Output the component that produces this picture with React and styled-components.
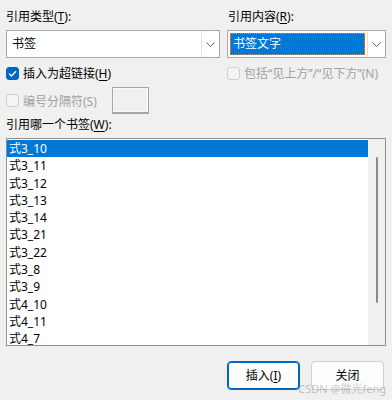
import React from "react";
import styled, { createGlobalStyle } from "styled-components";

const Global = createGlobalStyle`
  html, body { margin: 0; padding: 0; background: #f0f0f0; }
  body { width: 392px; height: 400px; overflow: hidden; }
  * { box-sizing: border-box; }
`;

const Dialog = styled.div`
  position: relative;
  width: 392px;
  height: 400px;
  padding: 9px 6px 0 6px;
  background: #f0f0f0;
  font-family: "Noto Sans", "Noto Sans CJK SC", sans-serif;
  font-size: 12px;
  color: #000;
`;

const TopGrid = styled.div`
  display: grid;
  grid-template-columns: 214px 159px;
  column-gap: 7px;
`;

const Label = styled.div`
  height: 16px;
  line-height: 16px;
  white-space: nowrap;
  padding-left: ${(p) => p.$indent || 0}px;
  color: ${(p) => (p.$disabled ? "#a0a0a0" : "#000")};
`;

const U = styled.span`
  text-decoration: underline;
  text-underline-offset: 2px;
`;

const Combo = styled.div`
  margin-top: 5px;
  height: 28px;
  border: 1px solid #a9a9a9;
  background: #fff;
  display: flex;
  align-items: stretch;
`;

const ComboField = styled.div`
  flex: 1;
  padding: 2px;
  display: flex;
`;

const ComboValue = styled.div`
  flex: 1;
  display: flex;
  align-items: center;
  padding-left: 3px;
  background: ${(p) => (p.$selected ? "#0078d7" : "transparent")};
  color: ${(p) => (p.$selected ? "#fff" : "#000")};
  outline: ${(p) => (p.$selected ? "1px dotted #ff8c1a" : "none")};
  outline-offset: -1px;
  line-height: 16px;
`;

const ComboButton = styled.div`
  width: 18px;
  border-left: 1px solid #e3e3e3;
  display: flex;
  align-items: center;
  justify-content: center;
  background: #fff;
`;

const CheckRow = styled.div`
  margin-top: 7px;
  height: 16px;
  display: flex;
  align-items: center;
  gap: 4px;
  white-space: nowrap;
  color: ${(p) => (p.$disabled ? "#a0a0a0" : "#000")};
`;

const Box = styled.span`
  width: 13px;
  height: 13px;
  border-radius: 3px;
  flex: none;
  display: inline-flex;
  align-items: center;
  justify-content: center;
  background: ${(p) => (p.$checked ? "#0067c0" : "#f4f4f4")};
  border: 1px solid ${(p) => (p.$checked ? "#0067c0" : "#cfcfcf")};
`;

const SepRow = styled.div`
  grid-column: 1 / 3;
  margin-top: 6px;
  height: 27px;
  display: flex;
  align-items: center;
  gap: 4px;
  color: #a0a0a0;
`;

const SepInput = styled.div`
  margin-left: 11px;
  width: 37px;
  height: 27px;
  border: 1px solid #a6a6a6;
  border-bottom-width: 2px;
  background: #f0f0f0;
  box-shadow: inset 0 0 0 1px #fafafa;
`;

const ListLabel = styled(Label)`
  margin-top: 3px;
`;

const List = styled.div`
  margin-top: 5px;
  height: 208px;
  border: 1px solid #8f8f8f;
  background: #fff;
  display: flex;
`;

const Items = styled.div`
  flex: 1;
  padding-top: 1px;
`;

const Item = styled.div`
  height: 17.3px;
  line-height: 17.3px;
  padding-left: 2px;
  background: ${(p) => (p.$selected ? "#0078d7" : "transparent")};
  color: ${(p) => (p.$selected ? "#fff" : "#000")};
`;

const ScrollTrack = styled.div`
  width: 17px;
  background: #f0f0f0;
  display: flex;
  justify-content: center;
  padding-top: 18px;
`;

const Thumb = styled.div`
  width: 2px;
  height: 146px;
  border-radius: 1px;
  background: #8a8a8a;
`;

const Buttons = styled.div`
  margin-top: 15px;
  display: flex;
  justify-content: flex-end;
  gap: 11px;
  padding-right: 2px;
`;

const Button = styled.button`
  width: 73px;
  height: 29px;
  border-radius: 4px;
  font-family: inherit;
  font-size: 12px;
  line-height: 12px;
  color: #000;
  background: #fdfdfd;
  border: 1px solid ${(p) => (p.$primary ? "#0067c0" : "#d0d0d0")};
  box-shadow: ${(p) => (p.$primary ? "inset 0 0 0 1px #0067c0" : "none")};
  padding: 0;
`;

const Watermark = styled.div`
  position: absolute;
  right: 6px;
  top: 383px;
  font-size: 11px;
  line-height: 12px;
  color: rgba(60, 60, 60, 0.3);
  font-family: "Noto Sans", "Noto Sans CJK SC", sans-serif;
  white-space: nowrap;
`;

const Chevron = () => (
  <svg width="9" height="5" viewBox="0 0 9 5">
    <path d="M0.5 0.5 L4.5 4.5 L8.5 0.5" fill="none" stroke="#5f5f5f" strokeWidth="1" />
  </svg>
);

const Tick = () => (
  <svg width="9" height="7" viewBox="0 0 9 7">
    <path d="M1 3.6 L3.4 6 L8 1.2" fill="none" stroke="#fff" strokeWidth="1.3" />
  </svg>
);

const items = [
  "式3_10", "式3_11", "式3_12", "式3_13", "式3_14", "式3_21",
  "式3_22", "式3_8", "式3_9", "式4_10", "式4_11", "式4_7",
];

export default function App() {
  return (
    <Dialog>
      <Global />
      <TopGrid>
        <Label>引用类型(<U>T</U>):</Label>
        <Label $indent={1}>引用内容(<U>R</U>):</Label>
        <Combo>
          <ComboField>
            <ComboValue>书签</ComboValue>
          </ComboField>
          <ComboButton><Chevron /></ComboButton>
        </Combo>
        <Combo>
          <ComboField>
            <ComboValue $selected>书签文字</ComboValue>
          </ComboField>
          <ComboButton><Chevron /></ComboButton>
        </Combo>
        <CheckRow>
          <Box $checked><Tick /></Box>
          <span>插入为超链接(<U>H</U>)</span>
        </CheckRow>
        <CheckRow $disabled>
          <Box />
          <span>包括“见上方”/“见下方”(N)</span>
        </CheckRow>
        <SepRow>
          <Box />
          <span>编号分隔符(S)</span>
          <SepInput />
        </SepRow>
      </TopGrid>
      <ListLabel>引用哪一个书签(<U>W</U>):</ListLabel>
      <List>
        <Items>
          {items.map((t, i) => (
            <Item key={t} $selected={i === 0}>{t}</Item>
          ))}
        </Items>
        <ScrollTrack><Thumb /></ScrollTrack>
      </List>
      <Buttons>
        <Button $primary>插入(<U>I</U>)</Button>
        <Button>关闭</Button>
      </Buttons>
      <Watermark>CSDN @微光feng</Watermark>
    </Dialog>
  );
}
